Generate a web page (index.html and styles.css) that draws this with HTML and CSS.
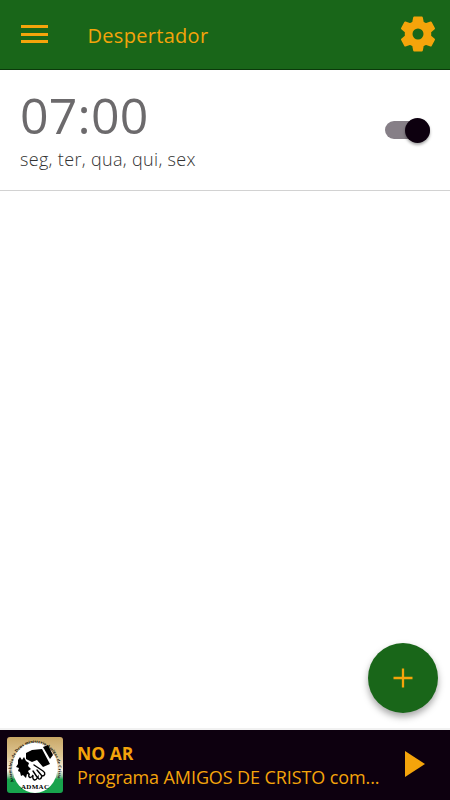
FILE: index.html
```html
<!DOCTYPE html>
<html lang="pt-BR">

<head>
    <meta charset="UTF-8">
    <meta name="viewport" content="width=device-width, initial-scale=1.0">
    <title>Despertador</title>
    <link rel="stylesheet" href="styles.css">
</head>

<body>
    <header class="toolbar">
        <button class="menu-button" aria-label="Menu">
            <span></span>
            <span></span>
            <span></span>
        </button>
        <h1>Despertador</h1>
        <button class="settings-button" aria-label="Configurações">
            <svg viewBox="0 0 36 36" width="36" height="36">
                <path d="M14.2 1.5h7.6l1 5 3 1.7 5-1.8 3.2 6-3.8 3.4v4.4l3.8 3.4-3.2 6-5-1.8-3 1.7-1 5h-7.6l-1-5-3-1.7-5 1.8-3.2-6 3.8-3.4v-4.4L2 12.4l3.2-6 5 1.8 3-1.7zM18 11.5a6.5 6.5 0 1 0 0 13 6.5 6.5 0 1 0 0-13z"/>
            </svg>
        </button>
    </header>

    <main>
        <div class="alarm">
            <div class="alarm-info">
                <div class="alarm-time">07:00</div>
                <div class="alarm-days">seg, ter, qua, qui, sex</div>
            </div>
            <label class="toggle">
                <input type="checkbox" checked aria-label="Ativar alarme">
                <span class="knob"></span>
            </label>
        </div>
        <button class="add-button" aria-label="Adicionar">
            <svg viewBox="0 0 20 20" width="20" height="20">
                <path d="M10 .5v19M.5 10h19"/>
            </svg>
        </button>
    </main>

    <footer class="player">
        <svg class="cover" viewBox="0 0 56 56" width="56" height="56">
            <defs>
                <linearGradient id="bg" x1="0" y1="0" x2="0" y2="1">
                    <stop offset="0" stop-color="#c9a766"/>
                    <stop offset=".35" stop-color="#dfc796"/>
                    <stop offset=".6" stop-color="#f4eee0"/>
                    <stop offset=".7" stop-color="#8fc09b"/>
                    <stop offset=".76" stop-color="#18a34d"/>
                    <stop offset="1" stop-color="#18a34d"/>
                </linearGradient>
                <path id="arc" d="M7 45A23.5 27 0 1 1 49 45"/>
            </defs>
            <rect width="56" height="56" rx="3" fill="url(#bg)"/>
            <ellipse cx="28" cy="30.5" rx="22.5" ry="25.5" fill="#fff"/>
            <text class="cover-ring"><textPath href="#arc">Assembleia de Deus ministerio Amigos de Cristo</textPath></text>
            <path d="M19 16l6-3 10-1 8 15-7 3-6-7-5 2-6-3z"/>
            <path d="M36 10l5-2 5 10-3 4z"/>
            <path d="M11 23l2-3 2 3 2-3 2 4 3 2-1 3 3 3-3 2 2 4-3-1-1 4-3-3-2 1-1-4-2-1 1-3-3-1 2-3z"/>
            <path class="fingers" d="M22 37c-1 4 2 5 4 1c-1 5 2 7 5 2c0 3 3 3 4-1c3 0 4-3 1-5l-9-6M30 33l5 6M26 34l4 6"/>
            <text class="cover-name" x="28" y="51.5" text-anchor="middle" textLength="28">ADMAC</text>
        </svg>
        <div class="track">
            <div class="track-status">NO AR</div>
            <div class="track-title">Programa AMIGOS DE CRISTO com...</div>
        </div>
        <button class="play-button" aria-label="Tocar">
            <svg viewBox="0 0 20 26" width="20" height="26">
                <path d="M0 0l20 13L0 26z"/>
            </svg>
        </button>
    </footer>
</body>

</html>
```
FILE: styles.css
```css
* {
    box-sizing: border-box;
}

body {
    margin: 0;
    height: 100vh;
    display: flex;
    flex-direction: column;
    background-color: #fff;
    font-family: "Open Sans", "Noto Sans", sans-serif;
}

button {
    padding: 0;
    border: none;
    background: none;
    cursor: pointer;
}

svg {
    display: block;
}

.toolbar {
    height: 70px;
    padding: 0 14px 1px 21px;
    display: flex;
    align-items: center;
    background-color: #196619;
    border-bottom: 1px solid #0b3a0b;
    color: #f4a40b;
}

.toolbar h1 {
    flex: 1;
    margin: 2px 0 0 39.5px;
    font-size: 20px;
    font-weight: 400;
    letter-spacing: 0.3px;
}

.menu-button {
    width: 27px;
    display: flex;
    flex-direction: column;
    gap: 4.5px;
}

.menu-button span {
    height: 3px;
    background-color: #f4a40b;
}

.settings-button svg,
.play-button svg {
    fill: #f4a40b;
}

.settings-button path {
    stroke: #f4a40b;
    stroke-width: 2;
    stroke-linejoin: round;
}

main {
    flex: 1;
    display: flex;
    flex-direction: column;
    justify-content: space-between;
    border-bottom: 2px solid #f1f1f1;
}

.alarm {
    height: 121px;
    padding: 0 20px;
    display: flex;
    align-items: center;
    justify-content: space-between;
    border-bottom: 1px solid #d2d2d2;
}

.alarm-time {
    font-size: 50px;
    line-height: 58px;
    letter-spacing: 0.2px;
    color: #6c6a6c;
}

.alarm-days {
    margin: 3px 0 3px;
    font-size: 18px;
    font-weight: 300;
    line-height: 24px;
    letter-spacing: 0.33px;
    color: #333;
}

.toggle {
    width: 45px;
    height: 18px;
    padding-right: 5px;
    display: flex;
    align-items: center;
    justify-content: flex-end;
    border-radius: 9px;
    background-color: #867f87;
}

.toggle input {
    display: none;
}

.knob {
    width: 25px;
    height: 25px;
    margin-right: -5px;
    border-radius: 50%;
    background-color: #0d000f;
    box-shadow: 0 2px 3px rgba(0, 0, 0, 0.35);
}

.add-button {
    width: 70px;
    height: 70px;
    margin: 0 12.5px 15.5px 0;
    align-self: flex-end;
    display: flex;
    align-items: center;
    justify-content: center;
    border-radius: 50%;
    background-color: #196619;
    box-shadow: 0 4px 7px rgba(0, 0, 0, 0.35);
}

.add-button path {
    stroke: #f4a40b;
    stroke-width: 2.3;
}

.player {
    height: 70px;
    padding: 0 25px 0 7px;
    display: flex;
    align-items: center;
    background-color: #0d000f;
    color: #f4a40b;
}

.cover-ring {
    font: bold 4.4px "Liberation Serif", serif;
    letter-spacing: 0.2px;
}

.cover-name {
    font: bold 7px "Liberation Serif", serif;
}

.fingers {
    fill: none;
    stroke: #000;
    stroke-width: 1.4;
    stroke-linecap: round;
}

.track {
    flex: 1;
    margin-left: 14px;
    white-space: nowrap;
    line-height: 24px;
}

.track-status {
    margin-top: 1px;
    line-height: 23px;
    font-size: 17.5px;
    font-weight: 700;
}

.track-title {
    font-size: 18px;
    letter-spacing: -0.1px;
}

.play-button {
    margin-bottom: 2px;
}
```
